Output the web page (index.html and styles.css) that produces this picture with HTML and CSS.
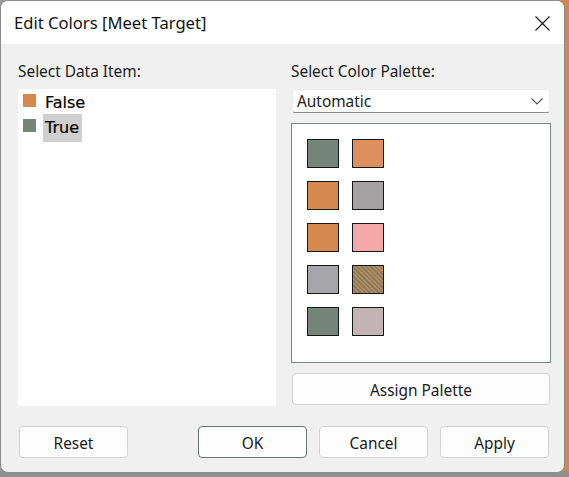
FILE: index.html
```html
<!DOCTYPE html>
<html>
<head>
<meta charset="utf-8">
<link rel="stylesheet" href="styles.css">
</head>
<body>
<div class="window">
  <div class="titlebar">
    <span class="title">Edit Colors [Meet Target]</span>
    <svg class="close" width="15" height="15" viewBox="0 0 15 15"><path d="M0.5 0.5 L14.5 14.5 M14.5 0.5 L0.5 14.5" stroke="#1a1a1a" stroke-width="1.2" fill="none"/></svg>
  </div>
  <div class="content">
    <div class="columns">
      <div class="col col-left">
        <div class="label">Select Data Item:</div>
        <div class="list">
          <div class="item"><span class="mark orange"></span><span class="item-text">False</span></div>
          <div class="item"><span class="mark green"></span><span class="item-text selected">True</span></div>
        </div>
      </div>
      <div class="col col-right">
        <div class="label">Select Color Palette:</div>
        <div class="combo"><span class="combo-text">Automatic</span>
          <svg class="chev" width="12" height="7" viewBox="0 0 12 7"><path d="M0.5 0.5 L6 6 L11.5 0.5" stroke="#555" stroke-width="1.1" fill="none"/></svg>
        </div>
        <div class="palette">
          <span class="sw green"></span><span class="sw mix-op"></span>
          <span class="sw orange"></span><span class="sw mix-go"></span>
          <span class="sw orange"></span><span class="sw pink"></span>
          <span class="sw grey"></span><span class="sw mix-og"></span>
          <span class="sw green"></span><span class="sw mix-gp"></span>
        </div>
        <button class="btn btn-wide">Assign Palette</button>
      </div>
    </div>
    <div class="footer">
      <button class="btn">Reset</button>
      <div class="footer-right">
        <button class="btn btn-default">OK</button>
        <button class="btn">Cancel</button>
        <button class="btn">Apply</button>
      </div>
    </div>
  </div>
</div>
</body>
</html>
```

FILE: styles.css
```css
html, body {
  margin: 0;
  padding: 0;
}
body {
  width: 569px;
  height: 477px;
  overflow: hidden;
  font-family: "Noto Sans", "Open Sans", sans-serif;
  color: #1a1a1a;
  background:
    linear-gradient(to bottom, transparent 0 471px, #8e8f8f 471px),
    linear-gradient(to right, #9a9a9a 0 30px, #d4874c 30px);
}
.window {
  width: 565px;
  height: 473px;
  box-sizing: border-box;
  border: 1px solid #8c8c8c;
  border-radius: 8px;
  overflow: hidden;
  background: #f0f0f0;
  display: flex;
  flex-direction: column;
}
.titlebar {
  height: 43px;
  flex: none;
  background: #ffffff;
  display: flex;
  align-items: center;
  justify-content: space-between;
  padding: 0 14px 0 13px;
}
.title {
  font-size: 16.6px;
  line-height: 22px;
  color: #111;
}
.close {
  display: block;
  margin-top: 1px;
}
.content {
  flex: 1;
  display: flex;
  flex-direction: column;
  padding: 17px 14px 0 17px;
}
.columns {
  display: flex;
  gap: 15px;
}
.col {
  display: flex;
  flex-direction: column;
  flex: none;
}
.col-left {
  width: 258px;
}
.col-right {
  width: 260px;
}
.label {
  font-size: 15.4px;
  line-height: 20px;
  height: 20px;
  color: #1a1a1a;
  padding-top: 1px;
}
.list {
  margin-top: 7px;
  height: 317px;
  background: #ffffff;
  padding-top: 1px;
  box-sizing: border-box;
}
.item {
  height: 25px;
  display: flex;
  align-items: center;
  font-family: "DejaVu Sans", sans-serif;
  font-size: 16px;
  color: #000;
  -webkit-text-stroke: 0.2px #000;
}
.mark {
  width: 13px;
  height: 13px;
  margin-left: 5px;
  margin-right: 7px;
  align-self: flex-start;
  margin-top: 4px;
  flex: none;
}
.item-text {
  height: 28px;
  line-height: 28px;
  padding: 0 3px 0 2px;
}
.item-text.selected {
  background: #cfcfcf;
}
.orange { background: #d5894f; }
.green { background: #75857b; }
.grey { background: #a6a5aa; }
.pink { background: #f4a8a8; }

.combo {
  margin-top: 7px;
  margin-left: 1px;
  width: 258px;
  height: 24px;
  box-sizing: border-box;
  background: #ffffff;
  border: 1px solid #ececec;
  border-bottom-color: #8a8a8a;
  border-radius: 3px;
  display: flex;
  align-items: center;
  justify-content: space-between;
  padding: 0 6px 0 4px;
  font-size: 15.4px;
  line-height: 22px;
}
.combo-text {
  padding-top: 2px;
}
.chev {
  display: block;
}
.palette {
  margin-top: 10px;
  height: 240px;
  box-sizing: border-box;
  background: #ffffff;
  border: 1px solid #7d8782;
  padding: 15px 0 0 15px;
  display: grid;
  grid-template-columns: 32px 32px;
  grid-auto-rows: 29px;
  column-gap: 13px;
  row-gap: 13px;
  align-content: start;
}
.sw {
  box-sizing: border-box;
  border: 1px solid #161616;
  display: block;
}
.mix-op {
  background: #dd8f5e;
}
.mix-go {
  background: #a6a2a4;
}
.mix-og {
  background: repeating-linear-gradient(45deg, #d4843f 0 1.6px, #72847a 1.6px 3.2px);
}
.mix-gp {
  background: #c2b3b6;
}
.btn {
  font-family: "Noto Sans", "Open Sans", sans-serif;
  font-size: 15.4px;
  color: #1a1a1a;
  background: #fdfdfd;
  border: 1px solid #d3d3d3;
  border-radius: 4px;
  width: 109px;
  height: 32px;
  padding: 3px 0 0 0;
  line-height: 20px;
}
.btn-wide {
  margin-top: 10px;
  margin-left: 1px;
  width: 258px;
  height: 32px;
}
.btn-default {
  border-color: #6c7470;
}
.footer {
  margin-top: 20px;
  display: flex;
  justify-content: space-between;
  padding: 0 1px 0 1px;
}
.footer-right {
  display: flex;
  gap: 12px;
}
```
